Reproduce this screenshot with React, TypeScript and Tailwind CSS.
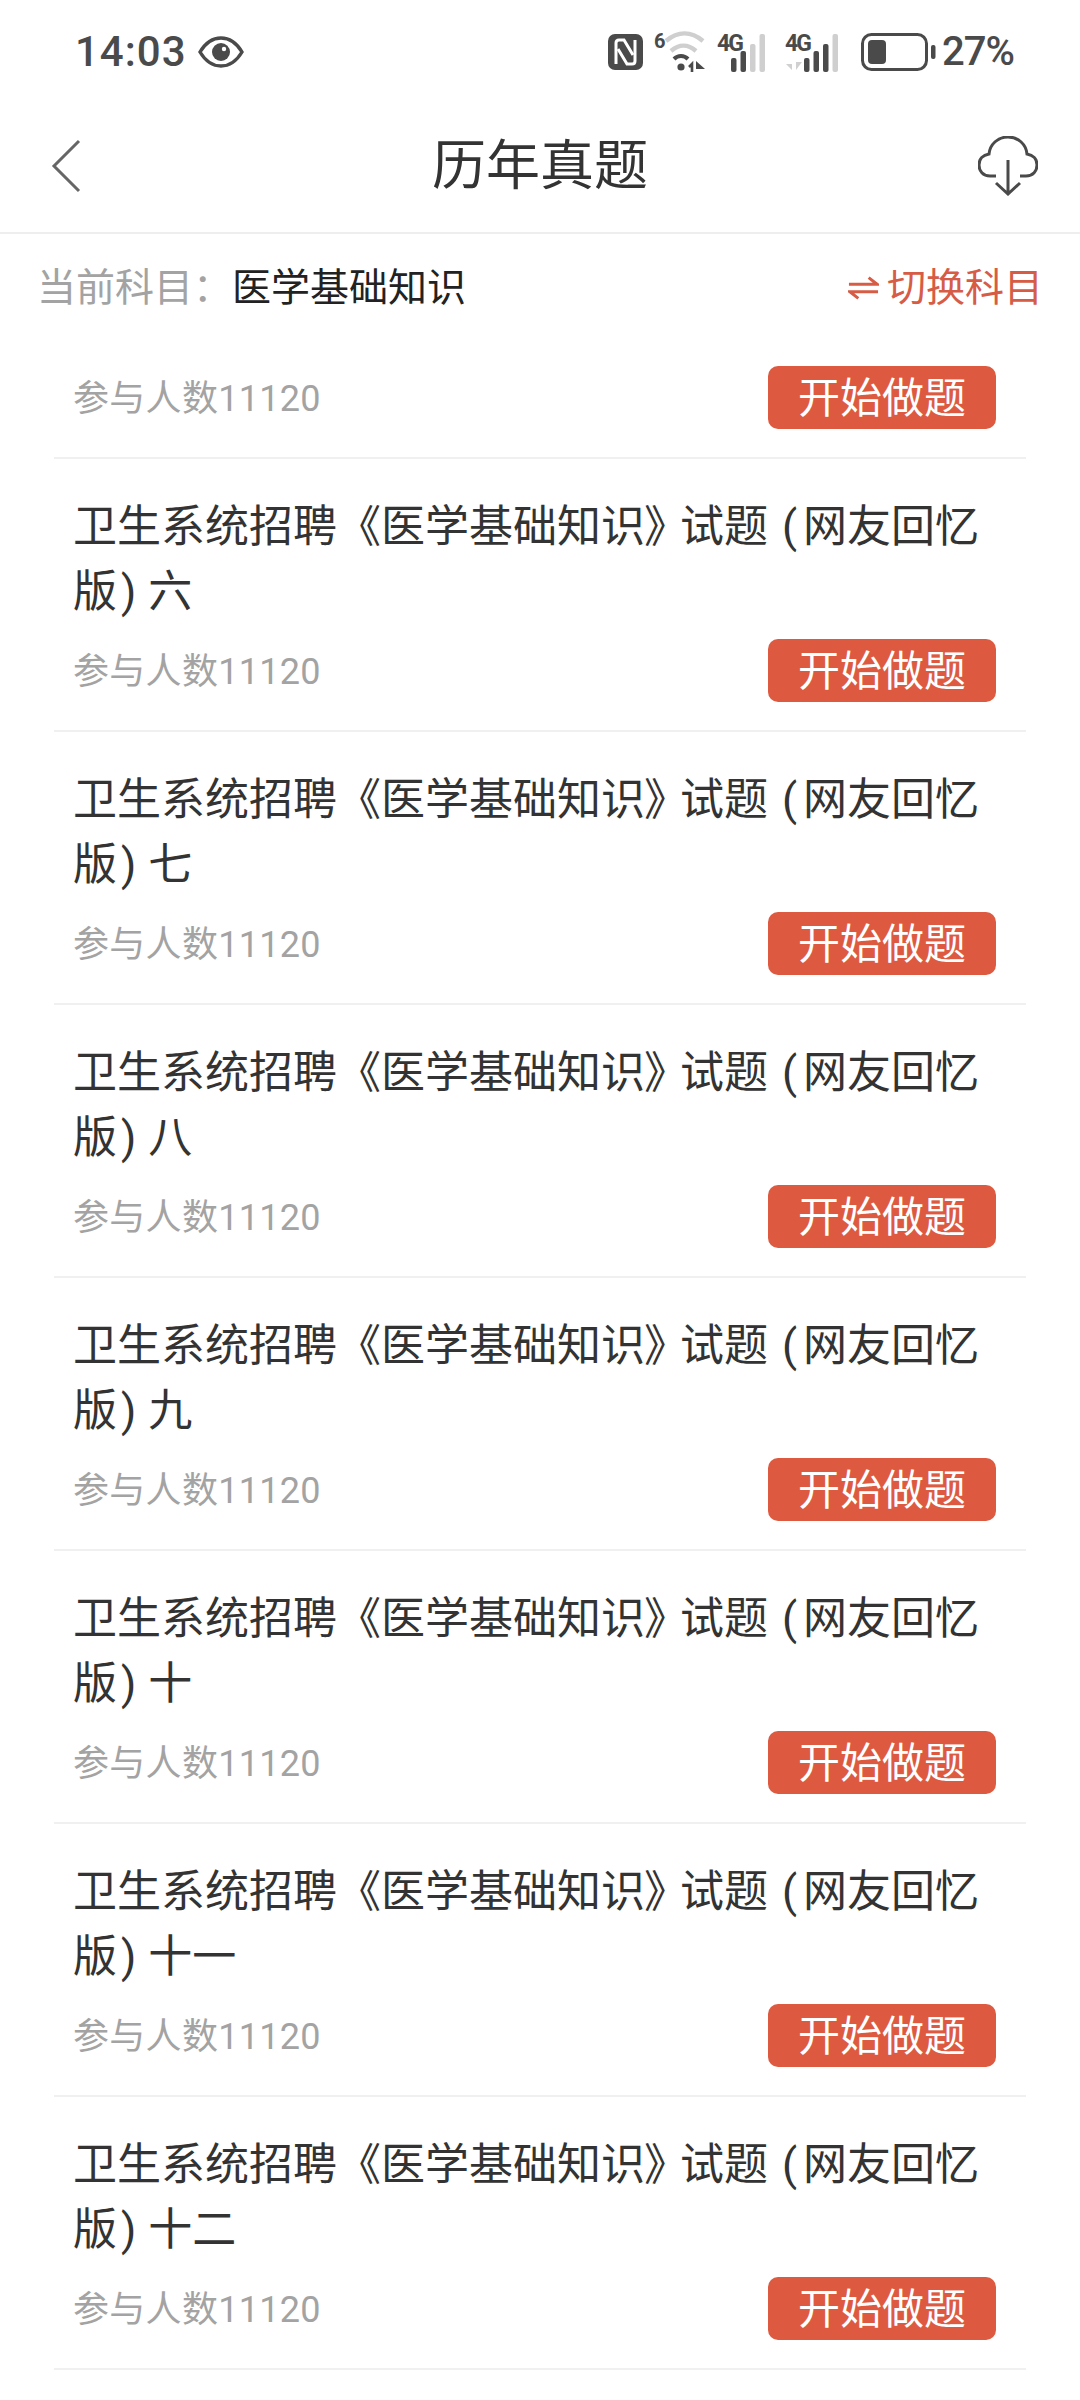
const ITEMS = ["六", "七", "八", "九", "十", "十一", "十二"];

function EyeIcon() {
    return (
        <svg width="46" height="32" viewBox="0 0 46 32" className="ml-[11px]">
            <path d="M2 16C8 6 15 2 23 2s15 4 21 14c-6 10-13 14-21 14S8 26 2 16Z" fill="none" stroke="#4a4a4a" strokeWidth="3.4" />
            <circle cx="23" cy="16" r="9" fill="#4a4a4a" />
            <circle cx="26" cy="13" r="2.2" fill="#fff" />
        </svg>
    );
}

function NfcIcon() {
    return (
        <svg width="35" height="36" viewBox="0 0 35 36">
            <rect width="35" height="36" rx="7" fill="#4a4a4a" />
            <path d="M8 30V9c0-2 1-3 3-3h5l9 15" fill="none" stroke="#fff" strokeWidth="3" />
            <path d="M27 6v21c0 2-1 3-3 3h-5l-9-15" fill="none" stroke="#fff" strokeWidth="3" />
        </svg>
    );
}

function WifiIcon() {
    return (
        <svg width="52" height="48" viewBox="0 -6 52 48" className="-mt-[6px] ml-[11px]">
            <text x="0" y="17" fontSize="20" fontWeight="700" fill="#4a4a4a" fontFamily="Roboto">6</text>
            <path d="M12 10C24 0 37 0 49 10" fill="none" stroke="#cfcfcf" strokeWidth="4.5" />
            <path d="M17 20C25 13 34 13 42 20" fill="none" stroke="#cfcfcf" strokeWidth="4.5" />
            <path d="M20 28C24 24 30 24 34 28" fill="none" stroke="#4a4a4a" strokeWidth="4" />
            <circle cx="27" cy="36" r="3.6" fill="#4a4a4a" />
            <path d="M38 41v-8l-3 3" fill="none" stroke="#4a4a4a" strokeWidth="2.6" />
            <path d="M42 41V30l9 8h-9z" fill="#4a4a4a" />
        </svg>
    );
}

function SignalIcon({ filled, arrows }: { filled: number; arrows?: boolean }) {
    const heights = [14, 21, 28, 38];
    return (
        <svg
            width={arrows ? 62 : 57}
            height="48"
            viewBox={arrows ? "0 -8 62 48" : "5 -8 57 48"}
            className="-mt-[8px] ml-[11px]"
        >
            <text x={arrows ? 0 : 5} y="19" fontSize="23" fontWeight="700" fill="#4a4a4a" fontFamily="Roboto" textLength="27">4G</text>
            {arrows && <path d="M7 24v14l-6-6h6zM11 24v14l6-8h-6z" fill="#d0d0d0" />}
            {heights.map((h, i) => (
                <rect key={i} x={19 + i * 9.5} y={40 - h} width="5.5" height={h} rx="2" fill={i < filled ? "#4a4a4a" : "#cfcfcf"} />
            ))}
        </svg>
    );
}

function BatteryIcon() {
    return (
        <svg width="75" height="38" viewBox="0 0 75 38" className="ml-[14px]">
            <rect x="1.5" y="1.5" width="64" height="35" rx="9" fill="none" stroke="#4a4a4a" strokeWidth="3" />
            <rect x="7" y="7" width="18" height="24" rx="4" fill="#4a4a4a" />
            <rect x="70" y="12" width="4.5" height="14" rx="2" fill="#4a4a4a" />
        </svg>
    );
}

function BackIcon() {
    return (
        <svg width="30" height="54" viewBox="0 0 30 54">
            <path d="M28 2 3 27l25 25" fill="none" stroke="#666" strokeWidth="3" />
        </svg>
    );
}

function CloudIcon() {
    return (
        <svg width="60" height="60" viewBox="0 0 60 60">
            <path d="M18 40h-6C5 40 1 35 1 29c0-6 4-10 10-11C12 8 20 1 30 1s18 7 19 17c6 1 10 5 10 11 0 6-4 11-11 11h-6" fill="none" stroke="#4a4a4a" strokeWidth="3" />
            <path d="M30 24v34M18 47l12 11 12-11" fill="none" stroke="#4a4a4a" strokeWidth="3" />
        </svg>
    );
}

function SwapIcon() {
    return (
        <svg width="31" height="26" viewBox="0 0 33 26">
            <path d="M1 9h30L22 2M32 17H2l9 7" fill="none" stroke="#d65c46" strokeWidth="3.2" />
        </svg>
    );
}

function MetaRow() {
    return (
        <div className="flex items-center justify-between pl-[19px] pr-[30px]">
            <span className="pt-[3px] text-[36px] leading-[60px] tracking-[0.3px] text-[#a3a3a3]">参与人数11120</span>
            <button className="h-[63px] w-[228px] rounded-[10px] bg-[#dd5a40] text-center text-[42px] leading-[65px] text-white">
                开始做题
            </button>
        </div>
    );
}

export default function App() {
    return (
        <div className="h-[2400px] w-[1080px] overflow-hidden bg-white font-['Roboto','Noto_Sans_CJK_SC',sans-serif]">
            {/* Status bar */}
            <div className="flex h-[100px] items-center pl-[75px] pr-[66px] pt-[3px]">
                <span className="text-[42px] font-medium tracking-[1px] text-[#4a4a4a]">14:03</span>
                <EyeIcon />
                <div className="flex-1" />
                <NfcIcon />
                <WifiIcon />
                <SignalIcon filled={2} />
                <SignalIcon filled={3} arrows />
                <BatteryIcon />
                <span className="ml-[6px] text-[40px] font-medium tracking-[-1px] text-[#4a4a4a]">27%</span>
            </div>

            {/* Header */}
            <div className="flex h-[134px] items-center justify-between border-b-2 border-[#eeeeee] pl-[51px] pr-[42px]">
                <div className="w-[51px]">
                    <BackIcon />
                </div>
                <h1 className="text-[54px] font-normal text-[#333333]">历年真题</h1>
                <CloudIcon />
            </div>

            {/* Current subject */}
            <div className="flex h-[108px] items-center justify-between px-[37px]">
                <div className="flex items-center text-[39px]">
                    <span className="text-[#a3a3a3]">当前科目：</span>
                    <span className="text-[#222222]">医学基础知识</span>
                </div>
                <div className="flex items-center gap-[8px] text-[39px] text-[#d65c46]">
                    <SwapIcon />
                    <span>切换科目</span>
                </div>
            </div>

            {/* List */}
            <div className="mx-[54px] pt-[24px]">
                <div className="border-b-2 border-[#f0f0f0] pb-[28px]">
                    <MetaRow />
                </div>
                {ITEMS.map((n) => (
                    <div key={n} className="border-b-2 border-[#f0f0f0] pb-[28px] pt-[36px]">
                        <div className="pl-[19px] text-[44px] leading-[65px] text-[#333333]">
                            <div>
                                卫生系统招聘《医学基础知识<span className="mr-[13px] [font-feature-settings:'palt']">》</span>试题<span className="ml-[14px] mr-[6px]">(</span>网友回忆
                            </div>
                            <div>
                                版<span className="ml-[4px] mr-[12px]">)</span>{n}
                            </div>
                        </div>
                        <div className="mt-[14px]">
                            <MetaRow />
                        </div>
                    </div>
                ))}
            </div>
        </div>
    );
}
